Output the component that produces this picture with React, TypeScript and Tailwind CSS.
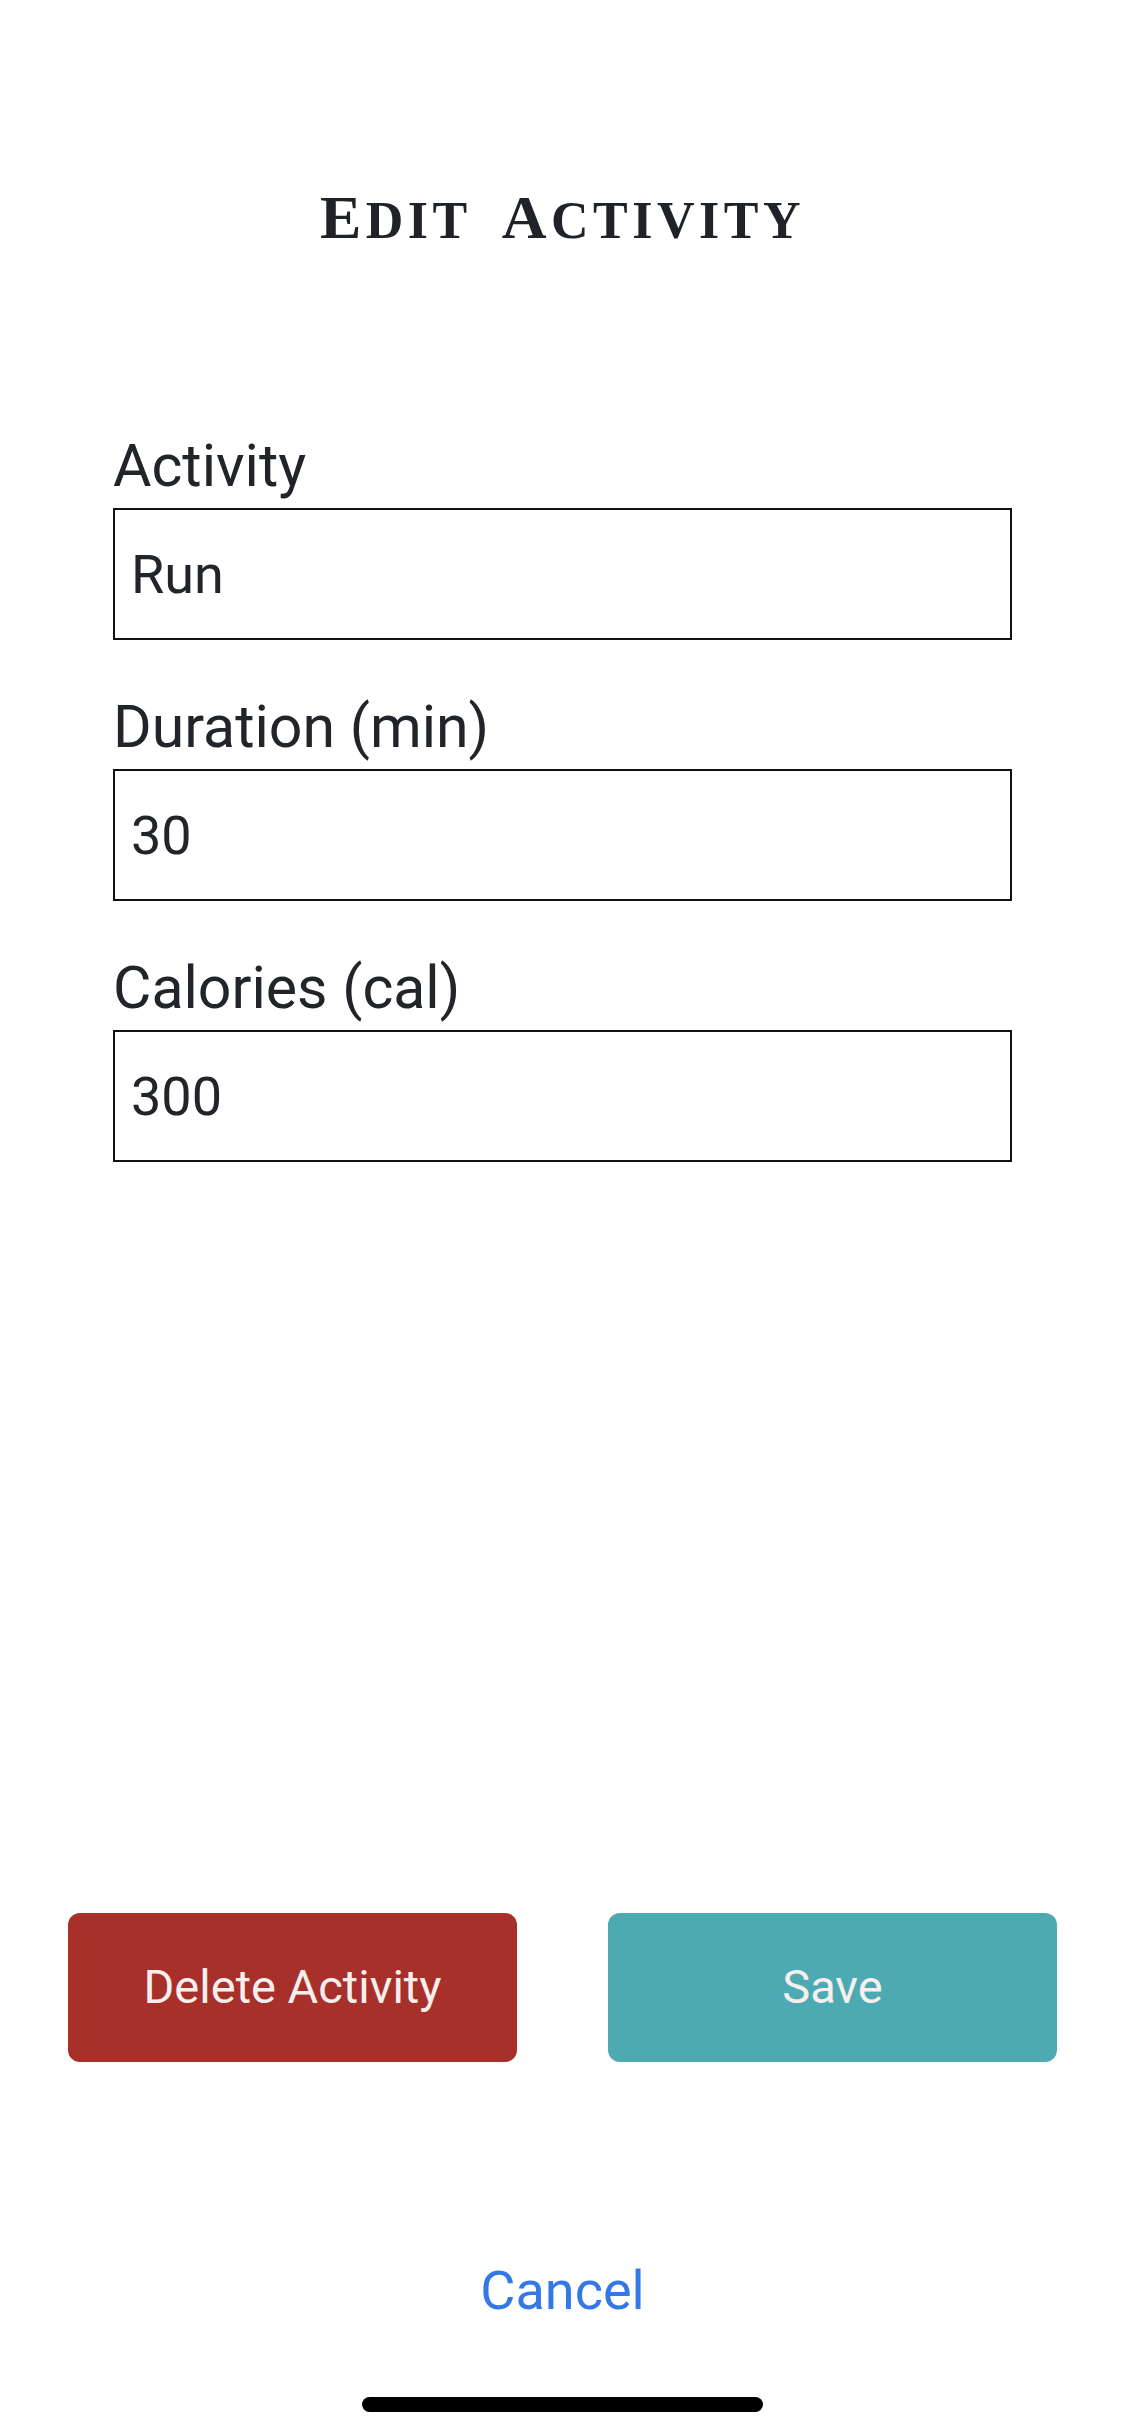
import React from 'react';

type Field = { label: string; value: string };

const fields: Field[] = [
  { label: 'Activity', value: 'Run' },
  { label: 'Duration (min)', value: '30' },
  { label: 'Calories (cal)', value: '300' },
];

function Title() {
  // copperplate-ish small caps: first letters bigger
  const word = (w: string) => (
    <span>
      <span className="text-[62px]">{w[0]}</span>
      <span className="text-[52px]">{w.slice(1).toUpperCase()}</span>
    </span>
  );
  return (
    <h1 className="mt-[186px] flex justify-center gap-[30px] leading-none font-bold tracking-[4.5px] text-[#1f2329] font-['Liberation_Serif',serif]">
      {word('Edit')}
      {word('Activity')}
    </h1>
  );
}

function FormField({ label, value }: Field) {
  return (
    <div className="flex flex-col">
      <label className="text-[59px] leading-none text-[#212529] mb-[13px]">{label}</label>
      <input
        type="text"
        defaultValue={value}
        className="h-[132px] w-full border-2 border-[#111] pl-[16px] text-[54px] text-[#212529] bg-white focus:outline-none"
      />
    </div>
  );
}

export default function App() {
  return (
    <div className="w-[1125px] h-[2436px] bg-white flex flex-col font-['Roboto','Noto_Sans',sans-serif]">
      <Title />
      <div className="mt-[188px] px-[113px] flex flex-col gap-[57px] w-[1125px]">
        {fields.map((f) => (
          <FormField key={f.label} label={f.label} value={f.value} />
        ))}
      </div>
      <div className="flex-1" />
      <div className="flex justify-between px-[68px]">
        <button className="w-[449px] h-[149px] rounded-[12px] bg-[#a8302b] text-[#f6efed] text-[47px]">
          Delete Activity
        </button>
        <button className="w-[449px] h-[149px] rounded-[12px] bg-[#4eaab2] text-[#f6efed] text-[47px]">
          Save
        </button>
      </div>
      <button className="mt-[202px] text-[54px] leading-none text-[#3478e5] self-center">Cancel</button>
      <div className="mt-[79px] mb-[24px] self-center w-[401px] h-[15px] rounded-full bg-black" />
    </div>
  );
}
